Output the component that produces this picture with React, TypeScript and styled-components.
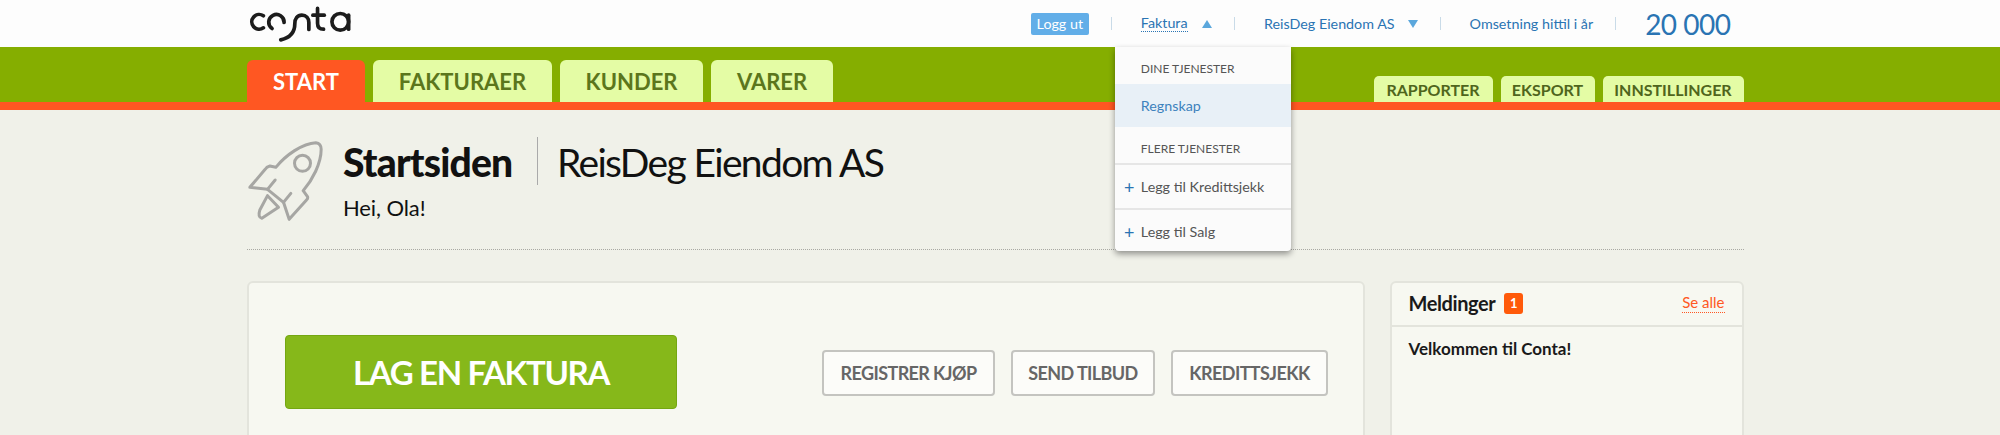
import styled, { createGlobalStyle } from 'styled-components';

const GlobalStyle = createGlobalStyle`
  html, body {
    margin: 0;
    padding: 0;
    background: #f0f1e9;
  }
  body {
    font-family: Lato, "Open Sans", sans-serif;
    color: #1a1a1a;
  }
`;

const BLUE = '#2a74b3';
const ORANGE = '#ff5722';

const Page = styled.div`
  height: 435px;
  overflow: hidden;
`;

const Wrap = styled.div`
  width: 1496.5px;
  margin-left: 247px;
`;

const TopBar = styled.header`
  height: 47px;
  background: #fdfdfd;
`;

const TopInner = styled(Wrap)`
  height: 47px;
  display: flex;
  align-items: center;
  justify-content: space-between;
  padding-right: 13px;
  box-sizing: border-box;
`;

const Logo = styled.svg`
  display: block;
  width: 107px;
  height: 37px;
  margin-left: 1px;
  stroke: #1c1c1c;
  stroke-width: 11;
  stroke-linecap: round;
  fill: none;
`;

const UserNav = styled.nav`
  display: flex;
  align-items: center;
  color: ${BLUE};
  font-size: 14.3px;
`;

const LogoutButton = styled.button`
  width: 58px;
  height: 22px;
  margin: 0;
  padding: 0;
  border: 0;
  border-radius: 2px;
  background: #62aee8;
  color: #fff;
  font: inherit;
`;

const Divider = styled.span`
  width: 1px;
  height: 13px;
  margin: 0 29px 0 22px;
  background: #c9dbe8;
`;

const MenuItem = styled.div`
  position: relative;
  display: flex;
  align-items: center;
`;

const ActiveLabel = styled.span`
  border-bottom: 1px dotted ${BLUE};
  line-height: 16px;
`;

const Arrow = styled.span<{ $up?: boolean }>`
  width: 0;
  height: 0;
  margin-left: ${(props) => (props.$up ? 14.5 : 13)}px;
  border-left: 5.5px solid transparent;
  border-right: 5.5px solid transparent;
  ${(props) => (props.$up ? 'border-bottom' : 'border-top')}: 8px solid #5ba7dc;
`;

const Revenue = styled.span`
  font-size: 28px;
  line-height: 32px;
  letter-spacing: -0.5px;
`;

const Dropdown = styled.div`
  position: absolute;
  z-index: 5;
  top: 32px;
  left: -26px;
  width: 176px;
  height: 204px;
  background: #fbfbfb;
  border-radius: 0 0 4px 4px;
  box-shadow: 0 3px 6px rgba(0, 0, 0, 0.4);
  font-size: 14.3px;
`;

const DropdownHeading = styled.div<{ $height: number }>`
  height: ${(props) => props.$height}px;
  box-sizing: border-box;
  padding: 6px 0 0 26px;
  display: flex;
  align-items: center;
  color: #555;
  font-size: 12px;
`;

const DropdownActive = styled.div`
  height: 43px;
  padding-left: 26px;
  display: flex;
  align-items: center;
  background: #e8f0f7;
  color: #3d82bd;
`;

const DropdownAdd = styled.div`
  height: 43px;
  display: flex;
  align-items: center;
  border-top: 2px solid #e6e6e6;
  color: #555;
`;

const PlusMark = styled.span`
  width: 26px;
  text-align: center;
  padding-left: 3px;
  box-sizing: border-box;
  color: ${BLUE};
  font-size: 18px;
  line-height: 18px;
`;

const GreenBar = styled.div`
  height: 55px;
  background: #85ae00;
  border-bottom: 8px solid ${ORANGE};
`;

const TabRow = styled(Wrap)`
  height: 55px;
  display: flex;
  align-items: flex-end;
  justify-content: space-between;
`;

const TabGroup = styled.div<{ $gap: number }>`
  display: flex;
  align-items: flex-end;
  gap: ${(props) => props.$gap}px;
`;

const MainTab = styled.div<{ $active?: boolean; $width: number }>`
  width: ${(props) => props.$width}px;
  height: 42px;
  border-radius: 6px 6px 0 0;
  display: flex;
  align-items: center;
  justify-content: center;
  background: ${(props) => (props.$active ? ORANGE : '#e4fca5')};
  color: ${(props) => (props.$active ? '#fff' : '#5b761c')};
  font-size: 22px;
  font-weight: 700;
`;

const SmallTab = styled.div<{ $width: number }>`
  width: ${(props) => props.$width}px;
  height: 26px;
  border-radius: 5px 5px 0 0;
  display: flex;
  align-items: center;
  justify-content: center;
  background: #e4fca5;
  color: #4f651c;
  font-size: 16px;
  font-weight: 700;
`;

const PageHead = styled(Wrap)`
  height: 140px;
  display: flex;
  border-bottom: 1px dotted #a9a9a3;
  box-sizing: border-box;
  padding-top: 30px;
`;

const Rocket = styled.svg`
  width: 77px;
  height: 84px;
  flex: none;
  margin-right: 19px;
  stroke: #a6a6a3;
  stroke-width: 9;
  stroke-linejoin: round;
  stroke-linecap: round;
  fill: none;
`;

const TitleBlock = styled.div`
  margin-top: -3px;
`;

const TitleRow = styled.div`
  display: flex;
  align-items: center;
  height: 50px;
`;

const PageTitle = styled.h1`
  margin: 0;
  font-size: 39px;
  line-height: 46px;
  font-weight: 900;
  letter-spacing: -0.8px;
  color: #111;
`;

const TitleDivider = styled.span`
  width: 1px;
  height: 48px;
  margin: -2px 18.5px 0 25px;
  background: #aaa;
`;

const CompanyName = styled.div`
  font-size: 39px;
  line-height: 46px;
  font-weight: 400;
  letter-spacing: -1.65px;
  color: #111;
`;

const Greeting = styled.div`
  margin-top: 7px;
  font-size: 22px;
  line-height: 28px;
  letter-spacing: -0.1px;
  color: #111;
`;

const Columns = styled(Wrap)`
  display: flex;
  justify-content: space-between;
  margin-top: 31px;
`;

const Panel = styled.section<{ $width: number }>`
  width: ${(props) => props.$width}px;
  height: 300px;
  box-sizing: border-box;
  background: #f7f8f1;
  border: 2px solid #e3e4dc;
  border-radius: 6px;
`;

const ActionPanelBody = styled.div`
  display: flex;
  align-items: center;
  justify-content: space-between;
  height: 74px;
  margin-top: 52px;
  padding: 0 35px 0 36px;
`;

const PrimaryAction = styled.button`
  width: 392px;
  height: 74px;
  margin: 0;
  border: 1px solid #74a712;
  border-radius: 4px;
  background: #86b81a;
  color: #fff;
  font: 700 33px Lato, sans-serif;
  letter-spacing: -1.3px;
`;

const ActionGroup = styled.div`
  display: flex;
  gap: 16px;
  margin-top: 2px;
`;

const SecondaryAction = styled.button<{ $width: number }>`
  width: ${(props) => props.$width}px;
  height: 46px;
  margin: 0;
  padding: 0;
  background: #fcfcf9;
  border: 2px solid #c4c4c0;
  border-radius: 4px;
  color: #666;
  font: 700 18px Lato, sans-serif;
  letter-spacing: -0.6px;
`;

const MessagesHead = styled.div`
  height: 40px;
  display: flex;
  align-items: center;
  padding: 0 17px 2px;
  border-bottom: 2px solid #e3e4dc;
`;

const MessagesTitle = styled.h2`
  margin: 0;
  font-size: 20px;
  font-weight: 700;
  letter-spacing: -0.4px;
  color: #1a1a1a;
`;

const CountBadge = styled.span`
  width: 19px;
  height: 21px;
  margin-left: 9px;
  border-radius: 3px;
  display: flex;
  align-items: center;
  justify-content: center;
  background: #ff5a0a;
  color: #fff;
  font-size: 13px;
  font-weight: 700;
`;

const SeeAll = styled.a`
  margin-left: auto;
  padding-bottom: 1px;
  border-bottom: 1px dotted ${ORANGE};
  color: ${ORANGE};
  font-size: 15px;
`;

const MessageText = styled.div`
  padding: 11px 17px;
  font-size: 17px;
  line-height: 22px;
  font-weight: 700;
  color: #1a1a1a;
`;

export default function App() {
  return (
    <Page>
      <GlobalStyle />
      <TopBar>
        <TopInner>
          <Logo viewBox="24 10 320 110">
            <path d="M70 42 A22 22 0 1 0 70 78" />
            <path d="M96 80 A23 23 0 1 1 132 62" />
            <path d="M122 114 C150 108 164 90 164 66 C164 50 172 40 185 40 C198 40 206 50 206 62 L206 83" />
            <path d="M232 20 L232 64 C232 76 238 82 250 82" />
            <path d="M218 40 L252 40" />
            <circle cx="300" cy="60" r="25" />
            <path d="M325 40 L325 82" />
          </Logo>
          <UserNav>
            <LogoutButton>Logg ut</LogoutButton>
            <Divider />
            <MenuItem>
              <ActiveLabel>Faktura</ActiveLabel>
              <Arrow $up />
              <Dropdown>
                <DropdownHeading $height={37}>DINE TJENESTER</DropdownHeading>
                <DropdownActive>Regnskap</DropdownActive>
                <DropdownHeading $height={36}>FLERE TJENESTER</DropdownHeading>
                <DropdownAdd>
                  <PlusMark>+</PlusMark>Legg til Kredittsjekk
                </DropdownAdd>
                <DropdownAdd>
                  <PlusMark>+</PlusMark>Legg til Salg
                </DropdownAdd>
              </Dropdown>
            </MenuItem>
            <Divider />
            <MenuItem>
              ReisDeg Eiendom AS
              <Arrow />
            </MenuItem>
            <Divider />
            <span>Omsetning hittil i år</span>
            <Divider />
            <Revenue>20 000</Revenue>
          </UserNav>
        </TopInner>
      </TopBar>
      <GreenBar>
        <TabRow>
          <TabGroup $gap={8}>
            <MainTab $active $width={118}>START</MainTab>
            <MainTab $width={179}>FAKTURAER</MainTab>
            <MainTab $width={143}>KUNDER</MainTab>
            <MainTab $width={122}>VARER</MainTab>
          </TabGroup>
          <TabGroup $gap={8}>
            <SmallTab $width={119}>RAPPORTER</SmallTab>
            <SmallTab $width={94}>EKSPORT</SmallTab>
            <SmallTab $width={141}>INNSTILLINGER</SmallTab>
          </TabGroup>
        </TabRow>
      </GreenBar>
      <PageHead>
        <Rocket viewBox="24 30 230 252">
          <path d="M32 172 L78 118 Q82 110 92 108 L110 112 C140 75 190 40 230 38 Q246 40 246 58 C246 100 220 150 192 182 L205 200 Q207 205 202 210 L150 268 L133 217 L85 178 Z" />
          <path d="M108 150 L85 178" />
          <path d="M155 190 L133 217" />
          <path d="M85 197 L118 232 L68 265 Q55 262 62 240 Z" />
          <circle cx="190" cy="100" r="24" />
        </Rocket>
        <TitleBlock>
          <TitleRow>
            <PageTitle>Startsiden</PageTitle>
            <TitleDivider />
            <CompanyName>ReisDeg Eiendom AS</CompanyName>
          </TitleRow>
          <Greeting>Hei, Ola!</Greeting>
        </TitleBlock>
      </PageHead>
      <Columns>
        <Panel $width={1118}>
          <ActionPanelBody>
            <PrimaryAction>LAG EN FAKTURA</PrimaryAction>
            <ActionGroup>
              <SecondaryAction $width={173}>REGISTRER KJØP</SecondaryAction>
              <SecondaryAction $width={144}>SEND TILBUD</SecondaryAction>
              <SecondaryAction $width={157}>KREDITTSJEKK</SecondaryAction>
            </ActionGroup>
          </ActionPanelBody>
        </Panel>
        <Panel $width={354}>
          <MessagesHead>
            <MessagesTitle>Meldinger</MessagesTitle>
            <CountBadge>1</CountBadge>
            <SeeAll>Se alle</SeeAll>
          </MessagesHead>
          <MessageText>Velkommen til Conta!</MessageText>
        </Panel>
      </Columns>
    </Page>
  );
}
